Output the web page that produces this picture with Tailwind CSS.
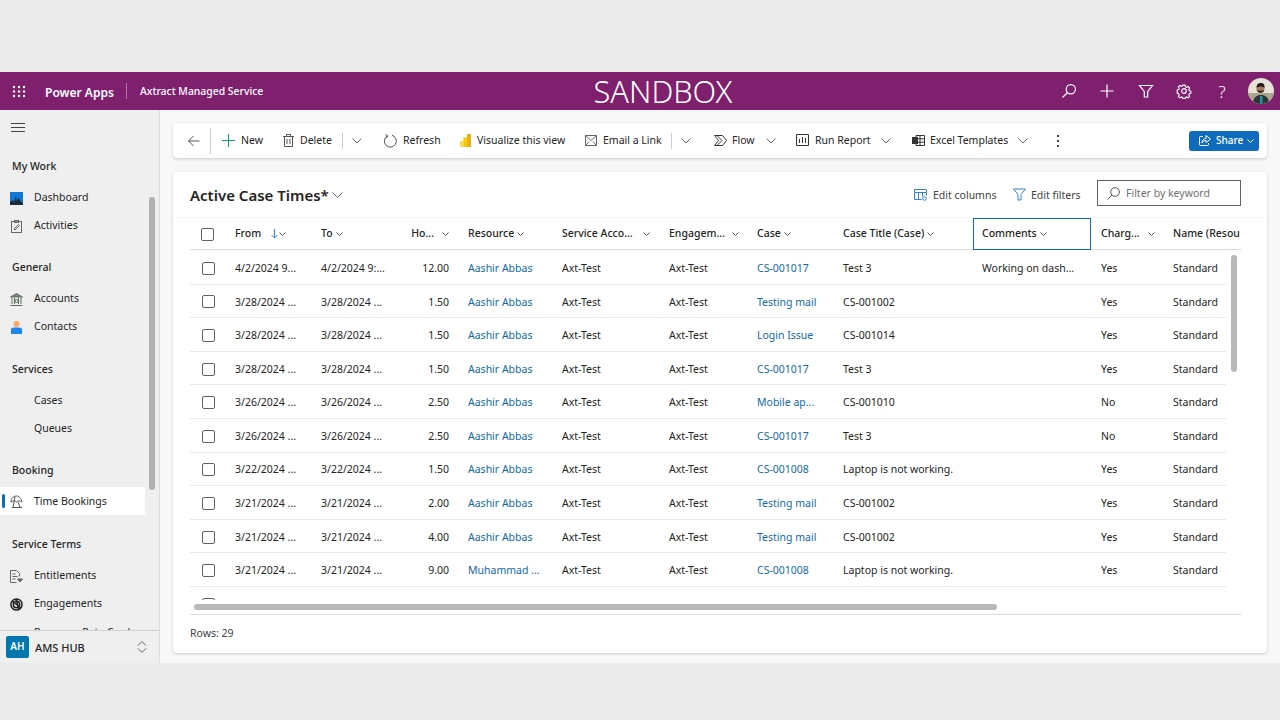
<!doctype html>
<html>
<head>
<meta charset="utf-8">
<script src="https://cdn.jsdelivr.net/npm/@tailwindcss/browser@4"></script>
</head>
<body class="m-0 h-[720px] w-[1280px] overflow-hidden bg-[#ebebeb] font-['Noto_Sans',sans-serif] text-[10.5px] text-[#242424]">
<div class="h-[72px]"></div>
<header class="flex h-[38px] items-center bg-[#7f206e] text-white">
  <svg class="ml-[12px] h-[13px] w-[14px]" viewBox="0 0 14 13" fill="#fff"><circle cx="2" cy="2" r="1.2"/><circle cx="7" cy="2" r="1.2"/><circle cx="12" cy="2" r="1.2"/><circle cx="2" cy="6.5" r="1.2"/><circle cx="7" cy="6.5" r="1.2"/><circle cx="12" cy="6.5" r="1.2"/><circle cx="2" cy="11" r="1.2"/><circle cx="7" cy="11" r="1.2"/><circle cx="12" cy="11" r="1.2"/></svg>
  <span class="ml-[19px] mt-[3px] w-[81px] text-[12px] font-semibold whitespace-nowrap">Power Apps</span>
  <span class="h-[16px] w-px bg-white/40"></span>
  <span class="ml-[13px] mt-[2px] w-[200px] text-[10.4px] font-medium whitespace-nowrap">Axtract Managed Service</span>
  <span class="ml-[248px] w-[150px] text-center text-[30.7px] leading-none font-light whitespace-nowrap">SANDBOX</span>
  <div class="ml-[323px] flex items-center">
    <svg class="h-[16px] w-[16px]" viewBox="0 0 16 16" fill="none" stroke="#fff" stroke-width="1.2"><circle cx="9.8" cy="6.2" r="4.6"/><path d="M6.5 9.5 1.5 14.5"/></svg>
    <svg class="ml-[22px] h-[16px] w-[16px]" viewBox="0 0 16 16" fill="none" stroke="#fff" stroke-width="1.2"><path d="M8 1.5v13M1.5 8h13"/></svg>
    <svg class="ml-[23px] h-[16px] w-[16px]" viewBox="0 0 16 16" fill="none" stroke="#fff" stroke-width="1.2"><path d="M1.5 2.5h13L9.7 8.5v5.5H6.3V8.5z"/></svg>
    <svg class="ml-[22px] h-[16px] w-[16px]" viewBox="0 0 16 16" fill="none" stroke="#fff" stroke-width="1.2"><circle cx="8" cy="8" r="2.3"/><path d="M6.8 1.5h2.4l.4 1.9 1.4.6 1.6-1 1.7 1.7-1 1.6.6 1.4 1.7.4v2.4l-1.7.4-.6 1.4 1 1.6-1.7 1.7-1.6-1-1.4.6-.4 1.3H6.8l-.4-1.3-1.4-.6-1.6 1-1.7-1.7 1-1.6-.6-1.4-1.7-.4V6.9l1.7-.4.6-1.4-1-1.6 1.7-1.7 1.6 1 1.4-.6z" transform="translate(.8 .8) scale(.9)"/></svg>
    <span class="ml-[22px] w-[16px] text-center text-[17px] leading-none font-light">?</span>
    <svg class="ml-[18px] h-[26px] w-[26px] rounded-full" viewBox="0 0 26 26"><rect width="26" height="26" fill="#e6e2d6"/><rect y="15" width="26" height="11" fill="#a9a58f"/><path d="M5 26c0-7 4-9 8-9s8 2 8 9z" fill="#2b3437"/><path d="M12 18h2.500v8h-2.500z" fill="#2f8fa5"/><circle cx="12.500" cy="11" r="4" fill="#a97a5b"/><path d="M8.500 10c0-4 2-5 4.500-5s4 2 3.500 5c-2-2-6-2-8 0z" fill="#1d1a18"/><path d="M9 12c1 3.500 6 3.500 7 0-1 1-6 1-7 0z" fill="#2a211c"/></svg>
  </div>
</header>
<div class="flex h-[553px] bg-[#f8f8f8]">
  <aside class="relative flex h-full w-[160px] shrink-0 flex-col border-r border-[#dcdcdc] bg-[#efefef]">
    <div class="h-[520px] overflow-hidden">
      <svg class="ml-[11px] mt-[13px] h-[9px] w-[14px]" viewBox="0 0 14 9" stroke="#444" stroke-width="1" fill="none"><path d="M0 .5h14M0 4.500h14M0 8.500h14"/></svg>
      <div class="mt-[18px] flex h-[34px] items-center pl-[12px] font-medium">My Work</div>
      <div class="flex h-7 items-center"><svg class="ml-[10px] mr-[11px] h-[13px] w-[13px]" viewBox="0 0 13 13"><rect width="13" height="13" fill="#0f78d4"/><path d="M0 13V10l3-2 1 2 2-6 1 5 2-3 2 4 2 1v2z" fill="#1c2a38"/></svg>Dashboard</div>
      <div class="flex h-7 items-center"><svg class="ml-[11px] mr-[12px] h-[13px] w-[11px]" viewBox="0 0 11 13" fill="none" stroke="#666"><rect x=".5" y="1.500" width="10" height="11"/><rect x="3.500" y=".5" width="4" height="2" fill="#999"/><path d="M3 9 7.500 4.500 8.500 5.500 4 10z"/></svg>Activities</div>
      <div class="mt-[11px] flex h-[34px] items-center pl-[12px] font-medium">General</div>
      <div class="flex h-7 items-center"><svg class="ml-[10px] mr-[11px] h-[13px] w-[13px]" viewBox="0 0 13 13" fill="none" stroke="#5c6f5c"><path d="M.5 4 6.500.5l6 3.500z" fill="#7b8a7b"/><path d="M2 5v6M4.500 5v6M8.500 5v6M11 5v6M.5 12.500h12"/><circle cx="6.500" cy="8" r="1.500"/></svg>Accounts</div>
      <div class="flex h-7 items-center"><svg class="ml-[11px] mr-[12px] h-[13px] w-[11px]" viewBox="0 0 11 13"><circle cx="5.500" cy="3" r="3" fill="#ffa668"/><path d="M0 13V8.500Q0 6.500 3 6.500h5q3 0 3 2V13z" fill="#1f86ec"/></svg>Contacts</div>
      <div class="mt-[12px] flex h-[34px] items-center pl-[12px] font-medium">Services</div>
      <div class="flex h-7 items-center pl-[34px]">Cases</div>
      <div class="flex h-7 items-center pl-[34px]">Queues</div>
      <div class="mt-[11px] -mb-px flex h-[34px] items-center pl-[12px] font-medium">Booking</div>
      <div class="flex h-7 w-[145px] items-center bg-white"><span class="ml-[2px] h-[14px] w-[3px] rounded-sm bg-[#0f6cbd]"></span><svg class="ml-[5px] mr-[11px] h-[13px] w-[13px]" viewBox="0 0 13 13" fill="none" stroke="#555"><path d="M1 7C1 3 4 1 6.500 1S11 3 12 7C10 5.500 8 5.500 6.500 7 5 5.500 3 5.500 1 7zM5 1.500 3 12.500M8 7l2 5.500M2 12.500h10"/></svg><span class="pt-[2px]">Time Bookings</span></div>
      <div class="mt-[13px] flex h-[34px] items-center pl-[12px] font-medium">Service Terms</div>
      <div class="flex h-7 items-center"><svg class="ml-[10px] mr-[11px] h-[13px] w-[13px]" viewBox="0 0 13 13" fill="none" stroke="#666"><path d="M.5.5h6l3 3v3M.5.5v12h6M2.500 4h3M2.500 6.500h5M2.500 9h3"/><path d="M7.500 9h5l-2.500 3z" fill="#666"/></svg>Entitlements</div>
      <div class="flex h-7 items-center"><svg class="ml-[10px] mr-[11px] h-[13px] w-[13px]" viewBox="0 0 13 13" fill="none" stroke="#222" stroke-width="1.500"><circle cx="6.500" cy="6.500" r="5.600"/><circle cx="6.500" cy="6.500" r="3.200"/><path d="M2 3l9 7M6 1 9 12"/></svg>Engagements</div>
      <div class="flex h-7 items-center pl-[34px] pt-[2px]">Resource Rate Card</div>
    </div>
    <div class="flex h-[33px] items-center border-t border-[#d0d0d0] bg-[#efefef]">
      <span class="ml-[6px] flex h-[22px] w-[23px] items-center justify-center rounded-[2px] bg-[#0078ae] pb-[2px] text-[10px] font-semibold text-white">AH</span>
      <span class="ml-[6px] w-[102px] pt-[3px] text-[11px] font-medium">AMS HUB</span>
      <svg class="h-[14px] w-[10px]" viewBox="0 0 11 14" fill="none" stroke="#555"><path d="M1 5.500 5.500 1l4.500 4.500M1 8.500 5.500 13l4.500-4.500"/></svg>
    </div>
    <div class="absolute left-[149px] top-[87px] h-[293px] w-[6px] rounded-[3px] bg-[#b0b0b0]"></div>
  </aside>
  <main class="w-[1120px] pl-[13px]">
    <div class="mt-[13px] flex h-[35px] w-[1094px] items-center rounded-[4px] bg-white shadow-[0_1px_3px_rgba(0,0,0,0.2)]">
      <svg class="ml-[15px] h-[12px] w-[12px]" viewBox="0 0 12 12" fill="none" stroke="#555"><path d="M.5 6h11M5.500 1 .5 6l5 5"/></svg>
      <span class="ml-[10px] h-[26px] w-px bg-[#ccc]"></span>
      <svg class="ml-[11px] h-[13px] w-[13px]" viewBox="0 0 13 13" fill="none" stroke="#13a45d" stroke-width="1.100"><path d="M6.500 0v13M0 6.500h13"/></svg>
      <span class="ml-[6px] w-[22px] whitespace-nowrap">New</span>
      <svg class="ml-[20px] h-[13px] w-[11px]" viewBox="0 0 11 13" fill="none" stroke="#555"><path d="M0 2.500h11M3.500 2.500V.5h4v2M1.500 2.500v10h8v-10M4 5v5M7 5v5"/></svg>
      <span class="ml-[6px] w-[32px] whitespace-nowrap">Delete</span>
      <span class="ml-[10px] h-[16px] w-px bg-[#ccc]"></span>
      <svg class="ml-[9px] h-[6px] w-[10px]" viewBox="0 0 10 6" fill="none" stroke="#666"><path d="M.5.5 5 5 9.500.5"/></svg>
      <svg class="ml-[21px] h-[14px] w-[14px]" viewBox="0 0 14 14" fill="none" stroke="#555"><path d="M4.500 1.800A6 6 0 1 0 9 1.300M2.500 .5l2.200 1.300L3.500 4"/></svg>
      <span class="ml-[6px] w-[36px] whitespace-nowrap">Refresh</span>
      <svg class="ml-[21px] h-[13px] w-[11px]" viewBox="0 0 11 13"><rect x="7" width="4" height="13" rx=".5" fill="#e8b00a"/><rect x="3.500" y="3.500" width="4" height="9.500" fill="#f2c811"/><rect y="7" width="4" height="6" fill="#fbdc54"/></svg>
      <span class="ml-[6px] w-[88px] whitespace-nowrap">Visualize this view</span>
      <svg class="ml-[20px] h-[11px] w-[12px]" viewBox="0 0 12 11" fill="none" stroke="#666"><path d="M.5.5h11v10H.5zM.5.5 6 5.500 11.500.5M.5 10.500l3.500-4M11.500 10.500 8 6.500"/></svg>
      <span class="ml-[6px] w-[58px] whitespace-nowrap">Email a Link</span>
      <span class="ml-[10px] h-[16px] w-px bg-[#ccc]"></span>
      <svg class="ml-[9px] h-[6px] w-[10px]" viewBox="0 0 10 6" fill="none" stroke="#666"><path d="M.5.5 5 5 9.500.5"/></svg>
      <svg class="ml-[23px] h-[11px] w-[13px]" viewBox="0 0 13 11" fill="none" stroke="#333"><path d="M.5.5h8l4 5-4 5h-8l4-5zM3 .5l5 5-5 5"/></svg>
      <span class="ml-[5px] w-[23px] whitespace-nowrap">Flow</span>
      <svg class="ml-[11px] h-[6px] w-[10px]" viewBox="0 0 10 6" fill="none" stroke="#666"><path d="M.5.5 5 5 9.500.5"/></svg>
      <svg class="ml-[20px] h-[13px] w-[13px]" viewBox="0 0 13 13" fill="none" stroke="#333"><path d="M.5.5h12v11H.5zM3.500 9V5M6.500 9V3M9.500 9V4"/></svg>
      <span class="ml-[6px] w-[55px] whitespace-nowrap">Run Report</span>
      <svg class="ml-[11px] h-[6px] w-[10px]" viewBox="0 0 10 6" fill="none" stroke="#666"><path d="M.5.5 5 5 9.500.5"/></svg>
      <svg class="ml-[21px] h-[11px] w-[13px]" viewBox="0 0 13 11"><path d="M4 .5h8.500v10H4zM4 3.800h8.500M4 7.200h8.500M8 .5v10" fill="none" stroke="#333"/><rect y="2" width="6" height="7" fill="#333"/></svg>
      <span class="ml-[5px] w-[77px] whitespace-nowrap">Excel Templates</span>
      <svg class="ml-[11px] h-[6px] w-[10px]" viewBox="0 0 10 6" fill="none" stroke="#666"><path d="M.5.5 5 5 9.500.5"/></svg>
      <span class="ml-[29px] flex h-[12px] w-[2px] flex-col justify-between"><i class="h-[2px] w-[2px] bg-[#444]"></i><i class="h-[2px] w-[2px] bg-[#444]"></i><i class="h-[2px] w-[2px] bg-[#444]"></i></span>
      <span class="ml-[130px] flex h-[20px] w-[70px] items-center rounded-[3px] bg-[#0f6cbd] text-[10px] font-medium text-white">
        <svg class="ml-[10px] h-[11px] w-[12px]" viewBox="0 0 12 11" fill="none" stroke="#fff"><path d="M4 1.500H1.500a1 1 0 0 0-1 1v7a1 1 0 0 0 1 1h7a1 1 0 0 0 1-1V8M7 .5l4.500 3.500L7 7.500V5.500C5 5.500 3.500 6.500 3 8c0-3 2-4.500 4-4.500z"/></svg>
        <span class="ml-[5px]">Share</span>
        <svg class="ml-[4px] h-[4px] w-[7px]" viewBox="0 0 7 4" fill="none" stroke="#fff"><path d="M.5.5 3.500 3.500 6.500.5"/></svg>
      </span>
    </div>
    <section class="relative mt-[14px] h-[481px] w-[1094px] rounded-[4px] bg-white shadow-[0_1px_3px_rgba(0,0,0,0.2)]">
      <div class="flex h-[46px] items-center border-b border-[#f5f5f5]">
        <span class="ml-[17px] w-[142px] pt-[1px] text-[15px] font-semibold whitespace-nowrap">Active Case Times*</span>
        <svg class="h-[6px] w-[11px]" viewBox="0 0 11 6" fill="none" stroke="#666"><path d="M.5.5 5.500 5.500 10.500.5"/></svg>
        <svg class="ml-[571px] h-[12px] w-[13px]" viewBox="0 0 13 12" fill="none" stroke="#2f84d1"><path d="M.5.5h12v3H.5zM.5 3.500v7h7M4.500 3.500v7M8.500 3.500v4M12.500 3.500v3"/><circle cx="10.500" cy="9.500" r="1.800"/></svg>
        <span class="ml-[6px] w-[64px] pt-[3px] whitespace-nowrap text-[#424242]">Edit columns</span>
        <svg class="ml-[16px] h-[13px] w-[13px]" viewBox="0 0 13 13" fill="none" stroke="#2f84d1"><path d="M.5 1h12L8 6.500V12H5V6.500z"/></svg>
        <span class="ml-[5px] w-[50px] pt-[3px] whitespace-nowrap text-[#424242]">Edit filters</span>
        <span class="ml-[16px] mt-[8px] flex h-[26px] w-[144px] items-center self-start border border-[#616161] text-[#707070]">
          <svg class="ml-[9px] h-[13px] w-[13px]" viewBox="0 0 13 13" fill="none" stroke="#555"><circle cx="8" cy="5" r="4.300"/><path d="M5 8 .5 12.500"/></svg>
          <span class="ml-[6px] pt-[1px] whitespace-nowrap">Filter by keyword</span>
        </span>
      </div>
      <div class="mx-[17px] h-[382px] w-[1051px] overflow-hidden">
        <div class="grid h-[32px] w-[1051px] grid-cols-[37px_86px_90px_57px_94px_107px_88px_86px_139px_119px_72px_100px] items-center border-b border-[#dcdcdc] pb-[1px] font-medium">
          <span class="ml-[11px] h-[13px] w-[13px] rounded-[2px] border border-[#616161]"></span>
          <span class="flex items-center pl-[8px]">From<svg class="ml-[10px] h-[10px] w-[7px]" viewBox="0 0 7 10" fill="none" stroke="#2f84d1"><path d="M3.500 0v9M.5 6l3 3 3-3"/></svg><svg class="ml-[1px] h-[4px] w-[7px]" viewBox="0 0 7 4" fill="none" stroke="#555"><path d="M.5.5 3.500 3.500 6.500.5"/></svg></span>
          <span class="flex items-center pl-[8px]">To<svg class="ml-[3px] h-[4px] w-[7px]" viewBox="0 0 7 4" fill="none" stroke="#555"><path d="M.5.5 3.500 3.500 6.500.5"/></svg></span>
          <span class="flex items-center justify-end pr-[11px]">Ho...<svg class="ml-[8px] h-[4px] w-[7px]" viewBox="0 0 7 4" fill="none" stroke="#555"><path d="M.5.5 3.500 3.500 6.500.5"/></svg></span>
          <span class="flex items-center pl-[8px]">Resource<svg class="ml-[3px] h-[4px] w-[7px]" viewBox="0 0 7 4" fill="none" stroke="#555"><path d="M.5.5 3.500 3.500 6.500.5"/></svg></span>
          <span class="flex items-center pl-[8px]">Service Acco...<svg class="ml-[10px] h-[4px] w-[7px]" viewBox="0 0 7 4" fill="none" stroke="#555"><path d="M.5.5 3.500 3.500 6.500.5"/></svg></span>
          <span class="flex items-center pl-[8px]">Engagem...<svg class="ml-[7px] h-[4px] w-[7px]" viewBox="0 0 7 4" fill="none" stroke="#555"><path d="M.5.5 3.500 3.500 6.500.5"/></svg></span>
          <span class="flex items-center pl-[8px]">Case<svg class="ml-[3px] h-[4px] w-[7px]" viewBox="0 0 7 4" fill="none" stroke="#555"><path d="M.5.5 3.500 3.500 6.500.5"/></svg></span>
          <span class="flex items-center pl-[8px]">Case Title (Case)<svg class="ml-[3px] h-[4px] w-[7px]" viewBox="0 0 7 4" fill="none" stroke="#555"><path d="M.5.5 3.500 3.500 6.500.5"/></svg></span>
          <span class="-ml-px flex h-[32px] w-[118px] items-center border border-[#0f6cbd] pl-[8px]">Comments<svg class="ml-[3px] h-[4px] w-[7px]" viewBox="0 0 7 4" fill="none" stroke="#555"><path d="M.5.5 3.500 3.500 6.500.5"/></svg></span>
          <span class="flex items-center pl-[8px]">Charg...<svg class="ml-[8px] h-[4px] w-[7px]" viewBox="0 0 7 4" fill="none" stroke="#555"><path d="M.5.5 3.500 3.500 6.500.5"/></svg></span>
          <span class="overflow-hidden pl-[8px] whitespace-nowrap">Name (Resou</span>
        </div>
        <div class="mt-px w-[1036px] overflow-hidden">
          <div class="grid h-[33.6px] grid-cols-[37px_86px_90px_57px_94px_107px_88px_86px_139px_119px_72px_61px] items-center border-b border-[#eaeaea] pt-[3px]"><span class="-mt-px ml-[12px] h-[13px] w-[13px] rounded-[2px] border border-[#616161]"></span><span class="pl-[8px]">4/2/2024 9...</span><span class="pl-[8px]">4/2/2024 9:...</span><span class="pr-[11px] text-right">12.00</span><span class="pl-[8px] text-[#0f6aa8]">Aashir Abbas</span><span class="pl-[8px]">Axt-Test</span><span class="pl-[8px]">Axt-Test</span><span class="pl-[8px] text-[#0f6aa8]">CS-001017</span><span class="pl-[8px]">Test 3</span><span class="pl-[8px]">Working on dash...</span><span class="pl-[8px]">Yes</span><span class="pl-[8px]">Standard</span></div>
          <div class="grid h-[33.6px] grid-cols-[37px_86px_90px_57px_94px_107px_88px_86px_139px_119px_72px_61px] items-center border-b border-[#eaeaea] pt-[3px]"><span class="-mt-px ml-[12px] h-[13px] w-[13px] rounded-[2px] border border-[#616161]"></span><span class="pl-[8px]">3/28/2024 ...</span><span class="pl-[8px]">3/28/2024 ...</span><span class="pr-[11px] text-right">1.50</span><span class="pl-[8px] text-[#0f6aa8]">Aashir Abbas</span><span class="pl-[8px]">Axt-Test</span><span class="pl-[8px]">Axt-Test</span><span class="pl-[8px] text-[#0f6aa8]">Testing mail</span><span class="pl-[8px]">CS-001002</span><span></span><span class="pl-[8px]">Yes</span><span class="pl-[8px]">Standard</span></div>
          <div class="grid h-[33.6px] grid-cols-[37px_86px_90px_57px_94px_107px_88px_86px_139px_119px_72px_61px] items-center border-b border-[#eaeaea] pt-[3px]"><span class="-mt-px ml-[12px] h-[13px] w-[13px] rounded-[2px] border border-[#616161]"></span><span class="pl-[8px]">3/28/2024 ...</span><span class="pl-[8px]">3/28/2024 ...</span><span class="pr-[11px] text-right">1.50</span><span class="pl-[8px] text-[#0f6aa8]">Aashir Abbas</span><span class="pl-[8px]">Axt-Test</span><span class="pl-[8px]">Axt-Test</span><span class="pl-[8px] text-[#0f6aa8]">Login Issue</span><span class="pl-[8px]">CS-001014</span><span></span><span class="pl-[8px]">Yes</span><span class="pl-[8px]">Standard</span></div>
          <div class="grid h-[33.6px] grid-cols-[37px_86px_90px_57px_94px_107px_88px_86px_139px_119px_72px_61px] items-center border-b border-[#eaeaea] pt-[3px]"><span class="-mt-px ml-[12px] h-[13px] w-[13px] rounded-[2px] border border-[#616161]"></span><span class="pl-[8px]">3/28/2024 ...</span><span class="pl-[8px]">3/28/2024 ...</span><span class="pr-[11px] text-right">1.50</span><span class="pl-[8px] text-[#0f6aa8]">Aashir Abbas</span><span class="pl-[8px]">Axt-Test</span><span class="pl-[8px]">Axt-Test</span><span class="pl-[8px] text-[#0f6aa8]">CS-001017</span><span class="pl-[8px]">Test 3</span><span></span><span class="pl-[8px]">Yes</span><span class="pl-[8px]">Standard</span></div>
          <div class="grid h-[33.6px] grid-cols-[37px_86px_90px_57px_94px_107px_88px_86px_139px_119px_72px_61px] items-center border-b border-[#eaeaea] pt-[3px]"><span class="-mt-px ml-[12px] h-[13px] w-[13px] rounded-[2px] border border-[#616161]"></span><span class="pl-[8px]">3/26/2024 ...</span><span class="pl-[8px]">3/26/2024 ...</span><span class="pr-[11px] text-right">2.50</span><span class="pl-[8px] text-[#0f6aa8]">Aashir Abbas</span><span class="pl-[8px]">Axt-Test</span><span class="pl-[8px]">Axt-Test</span><span class="pl-[8px] text-[#0f6aa8]">Mobile ap...</span><span class="pl-[8px]">CS-001010</span><span></span><span class="pl-[8px]">No</span><span class="pl-[8px]">Standard</span></div>
          <div class="grid h-[33.6px] grid-cols-[37px_86px_90px_57px_94px_107px_88px_86px_139px_119px_72px_61px] items-center border-b border-[#eaeaea] pt-[3px]"><span class="-mt-px ml-[12px] h-[13px] w-[13px] rounded-[2px] border border-[#616161]"></span><span class="pl-[8px]">3/26/2024 ...</span><span class="pl-[8px]">3/26/2024 ...</span><span class="pr-[11px] text-right">2.50</span><span class="pl-[8px] text-[#0f6aa8]">Aashir Abbas</span><span class="pl-[8px]">Axt-Test</span><span class="pl-[8px]">Axt-Test</span><span class="pl-[8px] text-[#0f6aa8]">CS-001017</span><span class="pl-[8px]">Test 3</span><span></span><span class="pl-[8px]">No</span><span class="pl-[8px]">Standard</span></div>
          <div class="grid h-[33.6px] grid-cols-[37px_86px_90px_57px_94px_107px_88px_86px_139px_119px_72px_61px] items-center border-b border-[#eaeaea] pt-[3px]"><span class="-mt-px ml-[12px] h-[13px] w-[13px] rounded-[2px] border border-[#616161]"></span><span class="pl-[8px]">3/22/2024 ...</span><span class="pl-[8px]">3/22/2024 ...</span><span class="pr-[11px] text-right">1.50</span><span class="pl-[8px] text-[#0f6aa8]">Aashir Abbas</span><span class="pl-[8px]">Axt-Test</span><span class="pl-[8px]">Axt-Test</span><span class="pl-[8px] text-[#0f6aa8]">CS-001008</span><span class="pl-[8px]">Laptop is not working.</span><span></span><span class="pl-[8px]">Yes</span><span class="pl-[8px]">Standard</span></div>
          <div class="grid h-[33.6px] grid-cols-[37px_86px_90px_57px_94px_107px_88px_86px_139px_119px_72px_61px] items-center border-b border-[#eaeaea] pt-[3px]"><span class="-mt-px ml-[12px] h-[13px] w-[13px] rounded-[2px] border border-[#616161]"></span><span class="pl-[8px]">3/21/2024 ...</span><span class="pl-[8px]">3/21/2024 ...</span><span class="pr-[11px] text-right">2.00</span><span class="pl-[8px] text-[#0f6aa8]">Aashir Abbas</span><span class="pl-[8px]">Axt-Test</span><span class="pl-[8px]">Axt-Test</span><span class="pl-[8px] text-[#0f6aa8]">Testing mail</span><span class="pl-[8px]">CS-001002</span><span></span><span class="pl-[8px]">Yes</span><span class="pl-[8px]">Standard</span></div>
          <div class="grid h-[33.6px] grid-cols-[37px_86px_90px_57px_94px_107px_88px_86px_139px_119px_72px_61px] items-center border-b border-[#eaeaea] pt-[3px]"><span class="-mt-px ml-[12px] h-[13px] w-[13px] rounded-[2px] border border-[#616161]"></span><span class="pl-[8px]">3/21/2024 ...</span><span class="pl-[8px]">3/21/2024 ...</span><span class="pr-[11px] text-right">4.00</span><span class="pl-[8px] text-[#0f6aa8]">Aashir Abbas</span><span class="pl-[8px]">Axt-Test</span><span class="pl-[8px]">Axt-Test</span><span class="pl-[8px] text-[#0f6aa8]">Testing mail</span><span class="pl-[8px]">CS-001002</span><span></span><span class="pl-[8px]">Yes</span><span class="pl-[8px]">Standard</span></div>
          <div class="grid h-[33.6px] grid-cols-[37px_86px_90px_57px_94px_107px_88px_86px_139px_119px_72px_61px] items-center border-b border-[#eaeaea] pt-[3px]"><span class="-mt-px ml-[12px] h-[13px] w-[13px] rounded-[2px] border border-[#616161]"></span><span class="pl-[8px]">3/21/2024 ...</span><span class="pl-[8px]">3/21/2024 ...</span><span class="pr-[11px] text-right">9.00</span><span class="pl-[8px] text-[#0f6aa8]">Muhammad ...</span><span class="pl-[8px]">Axt-Test</span><span class="pl-[8px]">Axt-Test</span><span class="pl-[8px] text-[#0f6aa8]">CS-001008</span><span class="pl-[8px]">Laptop is not working.</span><span></span><span class="pl-[8px]">Yes</span><span class="pl-[8px]">Standard</span></div>
          <div class="grid h-[33.6px] grid-cols-[37px_86px_90px_57px_94px_107px_88px_86px_139px_119px_72px_61px] items-center pt-[3px]"><span class="-mt-px ml-[12px] h-[13px] w-[13px] rounded-[2px] border border-[#616161]"></span></div>
        </div>
      </div>
      <div class="mx-[17px] mt-[14px] h-[39px] w-[1051px] border-t border-[#dcdcdc] pt-[11px] text-[#424242]">Rows: 29</div>
      <div class="absolute left-[21px] top-[432px] h-[6px] w-[803px] rounded-[3px] bg-[#b8b8b8]"></div>
      <div class="absolute left-[1058px] top-[83px] h-[117px] w-[6px] rounded-[3px] bg-[#b8b8b8]"></div>
    </section>
  </main>
</div>
</body>
</html>
